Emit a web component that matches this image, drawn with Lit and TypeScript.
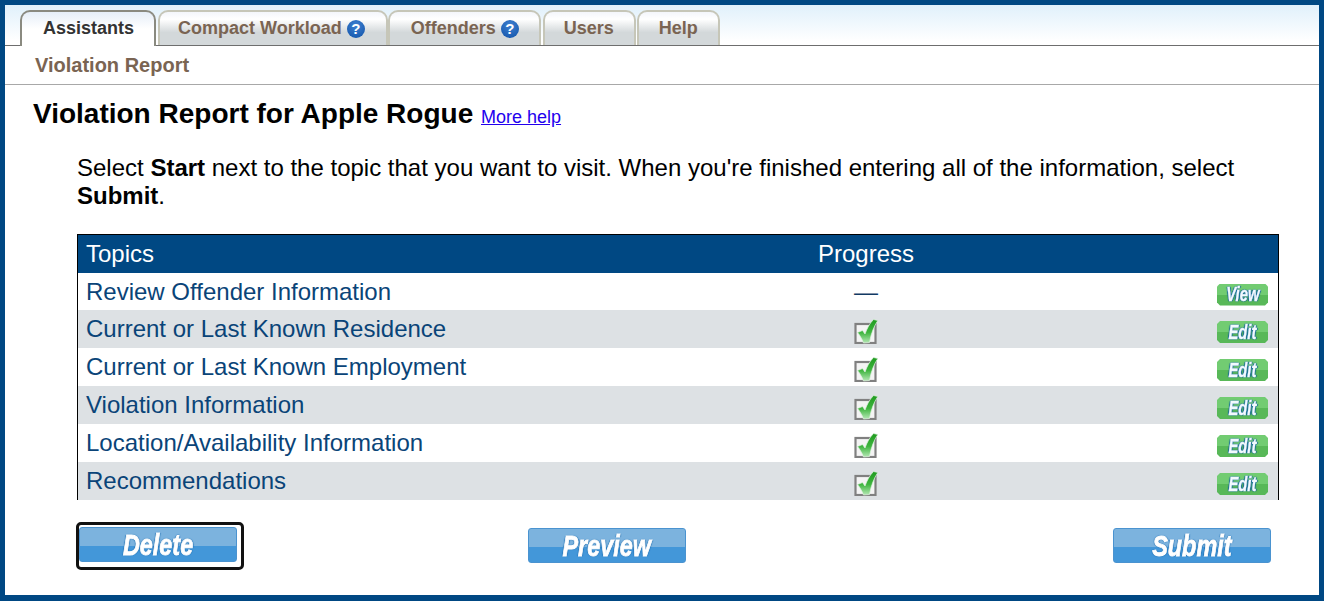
import { LitElement, html, css, svg } from "lit";
import { customElement } from "lit/decorators.js";

const check = svg`<svg class="check" width="24" height="25" viewBox="0 0 24 25">
  <defs><linearGradient id="g" x1="0" y1="0" x2="0" y2="1"><stop offset="0" stop-color="#1f9a1f"/><stop offset=".55" stop-color="#3fb53f"/><stop offset="1" stop-color="#b5e8b5"/></linearGradient></defs>
  <rect x="1.5" y="5" width="20" height="19" fill="#f4f4f4" stroke="#808080" stroke-width="2.2"/>
  <path d="M3.5 13.5 L8.5 11.5 L11 15 C13 9.5 15.5 4.5 19.5 .5 L23.8 1.5 C19.5 8 17 15 15.5 23.5 L9.5 24 C8 20 6 16.5 3.5 13.5 Z" fill="url(#g)" stroke="#dff2df" stroke-width=".7"/>
</svg>`;

const rows = [
  ["Review Offender Information", false, "View"],
  ["Current or Last Known Residence", true, "Edit"],
  ["Current or Last Known Employment", true, "Edit"],
  ["Violation Information", true, "Edit"],
  ["Location/Availability Information", true, "Edit"],
  ["Recommendations", true, "Edit"],
] as const;

@customElement("app-root")
export class AppRoot extends LitElement {
  static styles = css`
    :host { display: block; font-family: "Liberation Sans", Arial, sans-serif; }
    .frame { box-sizing: border-box; height: 601px; border: 5px solid #004883; border-bottom-width: 6px; background: #fff; }
    .tabbar { box-sizing: border-box; height: 41px; padding: 5px 0 0 15px; display: flex; border-bottom: 1px solid #6e6e6e;
      background: linear-gradient(#e0f0fb, #ffffff 90%); }
    .tab { box-sizing: border-box; height: 35px; display: flex; align-items: center; gap: 5px; font-size: 18px; font-weight: 700; color: #7a6452;
      border: 2px solid #c6c6b8; border-bottom: 0; border-radius: 10px 10px 0 0;
      background: linear-gradient(#f4f6fb 0, #fff 22%, #d3d8da 62%, #d3d8da 100%); }
    .tab.active { color: #333; height: 36px; margin-bottom: -1px; padding: 0 20px 2px 21px; border-color: #8a8a80; background: linear-gradient(#e6eef8, #fff 50%); }
    .tab.t2 { margin-left: 2px; padding-left: 18px; padding-right: 21px; }
    .tab.t3 { padding-left: 21px; padding-right: 20px; }
    .tab.t4 { margin-left: 2px; padding-left: 19px; padding-right: 20px; }
    .tab.t5 { margin-left: 1px; padding-left: 20px; padding-right: 20px; }
    .q { width: 18px; height: 18px; border-radius: 50%; background: radial-gradient(circle at 50% 30%, #3f80d0, #0f52a8); color: #fff; font-size: 15px; line-height: 18px; text-align: center; }
    .sub { box-sizing: border-box; height: 39px; border-bottom: 1px solid #a8a8a8; padding: 8px 0 0 30px; font-size: 20px; line-height: 22px; font-weight: 700; color: #7a6452; }
    h1 { margin: 0; padding: 13px 0 0 28px; height: 50px; box-sizing: border-box; font-size: 28px; line-height: 32px; font-weight: 700; color: #000; }
    h1 a { font-size: 18px; font-weight: 400; color: #2200ee; }
    .intro { margin: 0; padding: 19px 40px 0 72px; height: 99px; box-sizing: border-box; font-size: 24px; line-height: 28px; color: #000; }
    .table { margin-left: 72px; width: 1202px; box-sizing: border-box; border: 1px solid #000; border-bottom: 0; font-size: 24px; }
    .row { display: grid; grid-template-columns: 720px 120px 1fr; height: 38px; align-items: center; padding-left: 8px; color: #0a4478; }
    .row.first { height: 37px; }
    .row.head { background: #004883; color: #fff; height: 38px; }
    .row.alt { background: #dde1e4; }
    .c { text-align: center; }
    .dash { font-size: 24px; color: #123a63; }
    .check { display: block; margin: 5px auto 0; filter: blur(.3px); }
    .act { justify-self: end; margin-right: 10px; box-sizing: border-box; width: 51px; height: 22px; margin-top: 6px;
      clip-path: polygon(3px 0, calc(100% - 3px) 0, 100% 3px, 100% calc(100% - 3px), calc(100% - 3px) 100%, 3px 100%, 0 calc(100% - 3px), 0 3px);
      background: linear-gradient(#72cc72 0 50%, #58b858 50%); display: flex; align-items: center; justify-content: center; overflow: hidden;
      font: italic 700 19.5px "Liberation Sans", sans-serif; color: #f2fafd; -webkit-text-stroke: .4px #f2fafd; text-shadow: 0 0 2px #0f5ea0, 0 0 1px #0f5ea0, 0 0 1px #0f5ea0, 1px 0 1px #0f5ea0, -1px 0 1px #0f5ea0; filter: blur(.3px); }
    .squeeze { display: inline-block; transform: scaleX(.76); }
    .buttons { display: grid; grid-template-columns: 452px 585px auto; padding: 22px 0 0 71px; align-items: start; }
    .focus { justify-self: start; box-sizing: border-box; width: 168px; height: 48px; padding: 2px 3px 3px 0; border: 3px solid #111; border-radius: 5px; display: block; }
    .btn { box-sizing: border-box; width: 158px; height: 35px; border: 1px solid #4a93d0; border-radius: 3px; overflow: hidden;
      background: linear-gradient(#7cb3de 0 54%, #4397d9 54%); display: flex; align-items: center; justify-content: center;
      font: italic 700 30px "Liberation Sans", sans-serif; color: #fff; -webkit-text-stroke: .9px #fff; text-shadow: 0 0 2px #1c6cae, 0 0 1px #1c6cae, 1px 0 1px #1c6cae, -1px 0 1px #1c6cae; filter: blur(.3px); }
    .btn .squeeze { transform: scaleX(.78); }
    .pad { margin-top: 6px; }
  `;
  render() {
    return html`<div class="frame">
      <div class="tabbar">
        <div class="tab active">Assistants</div>
        <div class="tab t2">Compact Workload <span class="q">?</span></div>
        <div class="tab t3">Offenders <span class="q">?</span></div>
        <div class="tab t4">Users</div>
        <div class="tab t5">Help</div>
      </div>
      <div class="sub">Violation Report</div>
      <h1>Violation Report for Apple Rogue <a href="#">More help</a></h1>
      <p class="intro">Select <b>Start</b> next to the topic that you want to visit. When you're finished entering all of the information, select <b>Submit</b>.</p>
      <div class="table">
        <div class="row head"><span>Topics</span><span class="c">Progress</span><span></span></div>
        ${rows.map(([name, done, act], i) => html`<div class="row ${i % 2 ? "alt" : ""} ${i === 0 ? "first" : ""}">
          <span class="name">${name}</span>
          <span class="c">${done ? check : html`<span class="dash">—</span>`}</span>
          <span class="act"><span class="squeeze">${act}</span></span>
        </div>`)}
      </div>
      <div class="buttons">
        <div class="focus"><div class="btn"><span class="squeeze">Delete</span></div></div>
        <div class="btn pad"><span class="squeeze">Preview</span></div>
        <div class="btn pad"><span class="squeeze">Submit</span></div>
      </div>
    </div>`;
  }
}
